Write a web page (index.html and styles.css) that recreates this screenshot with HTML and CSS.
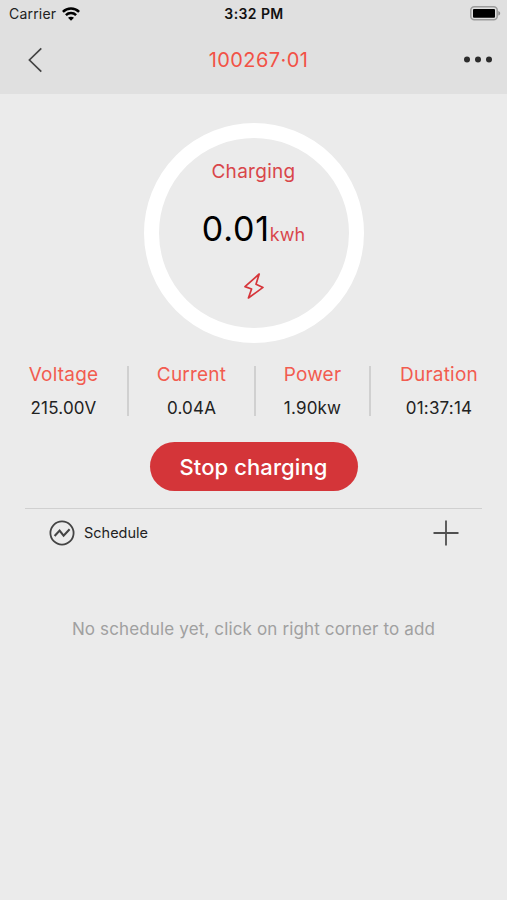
FILE: index.html
```html
<!DOCTYPE html>
<html lang="en">
<head>
    <meta charset="UTF-8">
    <meta name="viewport" content="width=device-width, initial-scale=1.0">
    <title>Charging</title>
    <link rel="stylesheet" href="styles.css">
</head>
<body>
    <header class="header">
        <div class="status-bar">
            <div class="carrier">
                <span>Carrier</span>
                <svg class="wifi" width="18" height="14" viewBox="0 0 18 14" fill="none" stroke="#000" stroke-width="2.5">
                    <path d="M0.9 4.9C5.4 0.4 12.6 0.4 17.1 4.9"/>
                    <path d="M3.9 8.1C6.7 5.3 11.3 5.3 14.1 8.1"/>
                    <path d="M9 13.8L6 10.8C7.6 9.3 10.4 9.3 12 10.8Z" fill="#000" stroke="none"/>
                </svg>
            </div>
            <span class="time">3:32 PM</span>
            <svg class="battery" width="31" height="15" viewBox="0 0 31 15">
                <rect x="0.8" y="0.8" width="26.4" height="13" rx="3.5" fill="none" stroke="#9b9b9b" stroke-width="1.5"/>
                <rect x="3" y="3" width="22" height="8.7" rx="1" fill="#000"/>
                <path d="M28.3 5C30.8 5.8 30.8 8.8 28.3 9.6Z" fill="#8c8c8c"/>
            </svg>
        </div>
        <nav class="nav-bar">
            <svg class="back" width="16" height="26" viewBox="0 0 16 26" fill="none" stroke="#444" stroke-width="1.7">
                <path d="M14.3 1.3L2.4 13L14.3 24.7"/>
            </svg>
            <h1 class="title">100267·01</h1>
            <svg class="more" width="30" height="8" viewBox="0 0 30 8" fill="#2c2c2c">
                <circle cx="4" cy="3.5" r="3"/>
                <circle cx="15" cy="3.5" r="3"/>
                <circle cx="26" cy="3.5" r="3"/>
            </svg>
        </nav>
    </header>

    <main>
        <div class="gauge">
            <p class="gauge-label">Charging</p>
            <p class="gauge-value">0.01<span class="unit">kwh</span></p>
            <svg class="bolt" width="22" height="28" viewBox="0 0 22 28" fill="none" stroke="#d6353a" stroke-width="1.7" stroke-linejoin="round">
                <path d="M16.2 2L2 14.6L8.6 17L5.4 26L20 15.4L13 12.2Z"/>
            </svg>
        </div>

        <div class="stats">
            <div class="stat">
                <span class="stat-name">Voltage</span>
                <span class="stat-value">215.00V</span>
            </div>
            <div class="stat">
                <span class="stat-name">Current</span>
                <span class="stat-value">0.04A</span>
            </div>
            <div class="stat">
                <span class="stat-name">Power</span>
                <span class="stat-value">1.90kw</span>
            </div>
            <div class="stat">
                <span class="stat-name">Duration</span>
                <span class="stat-value">01:37:14</span>
            </div>
        </div>

        <button class="stop" type="button">Stop charging</button>

        <section class="schedule">
            <div class="schedule-head">
                <svg width="26" height="26" viewBox="0 0 26 26" fill="none" stroke="#444" stroke-width="1.8">
                    <circle cx="13" cy="13" r="11.6"/>
                    <path d="M5.6 16L10.6 10.6L14.6 15.6L20.6 9.2" stroke-width="2.1"/>
                </svg>
                <span class="schedule-title">Schedule</span>
                <svg class="add" width="26" height="26" viewBox="0 0 26 26" fill="none" stroke="#505050" stroke-width="1.8">
                    <path d="M13 0.5V25.5M0.5 13H25.5"/>
                </svg>
            </div>
            <p class="empty">No schedule yet, click on right corner to add</p>
        </section>
    </main>
</body>
</html>
```
FILE: styles.css
```css
body {
    margin: 0;
    min-height: 100vh;
    background-color: #ebebeb;
    font-family: Inter, "Liberation Sans", sans-serif;
    color: #222;
}

h1,
p {
    margin: 0;
    font-weight: 400;
}

svg {
    display: block;
    flex-shrink: 0;
}

.header {
    height: 94px;
    background-color: #e0e0e0;
}

.status-bar {
    display: grid;
    grid-template-columns: 1fr auto 1fr;
    align-items: center;
    height: 27px;
    padding: 0 6px 1px 7px;
    font-size: 14px;
}

.carrier {
    display: flex;
    align-items: center;
    gap: 6px;
    padding-left: 2px;
    letter-spacing: 0.2px;
}

.time {
    color: #111;
    font-weight: 600;
    letter-spacing: 0.4px;
}

.battery {
    justify-self: end;
}

.nav-bar {
    display: grid;
    grid-template-columns: 1fr auto 1fr;
    align-items: center;
    height: 64px;
    padding: 0 14px;
}

.back {
    margin-left: 13px;
}

.title {
    padding-left: 10px;
    color: #f25246;
    font-size: 20px;
    letter-spacing: 0.4px;
}

.more {
    justify-self: end;
}

.gauge {
    box-sizing: border-box;
    display: flex;
    flex-direction: column;
    align-items: center;
    width: 220px;
    height: 220px;
    margin: 29px auto 0;
    padding-top: 22px;
    border: 15px solid #fff;
    border-radius: 50%;
}

.gauge-label {
    color: #d9464a;
    font-size: 19px;
    line-height: 24px;
    letter-spacing: 0.3px;
}

.gauge-value {
    margin-top: 23px;
    color: #000;
    font-size: 34px;
    line-height: 44px;
    letter-spacing: 0.8px;
    white-space: nowrap;
}

.unit {
    color: #d9464a;
    font-size: 18px;
    letter-spacing: 0;
}

.bolt {
    margin-top: 15px;
}

.stats {
    display: grid;
    grid-template-columns: 127px 127px 115px 138px;
    margin-top: 23px;
}

.stat {
    display: flex;
    flex-direction: column;
    align-items: center;
    height: 50px;
}

.stat + .stat {
    border-left: 2px solid #d0d0d0;
}

.stat-name {
    margin-top: -3px;
    color: #f25c50;
    font-size: 19px;
    line-height: 24px;
    letter-spacing: 0.2px;
}

.stat-value {
    margin-top: 11px;
    font-size: 17px;
    line-height: 20px;
    letter-spacing: 0.2px;
}

.stop {
    display: block;
    width: 208px;
    height: 49px;
    margin: 26px auto 0;
    padding: 0;
    border: none;
    border-radius: 25px;
    background-color: #d43539;
    color: #fff;
    font-family: inherit;
    font-size: 22px;
    font-weight: 500;
    letter-spacing: 0.1px;
}

.schedule {
    margin: 17px 25px 0;
    border-top: 1px solid #d0d0d0;
}

.schedule-head {
    display: flex;
    align-items: center;
    height: 48px;
    padding: 0 23px 0 24px;
}

.schedule-title {
    margin-left: 9px;
    padding-bottom: 1px;
    font-size: 14.5px;
}

.add {
    margin-left: auto;
}

.empty {
    margin-top: 61px;
    color: #a0a0a0;
    font-size: 17px;
    line-height: 22px;
    letter-spacing: 0.14px;
    text-align: center;
    white-space: nowrap;
}
```
